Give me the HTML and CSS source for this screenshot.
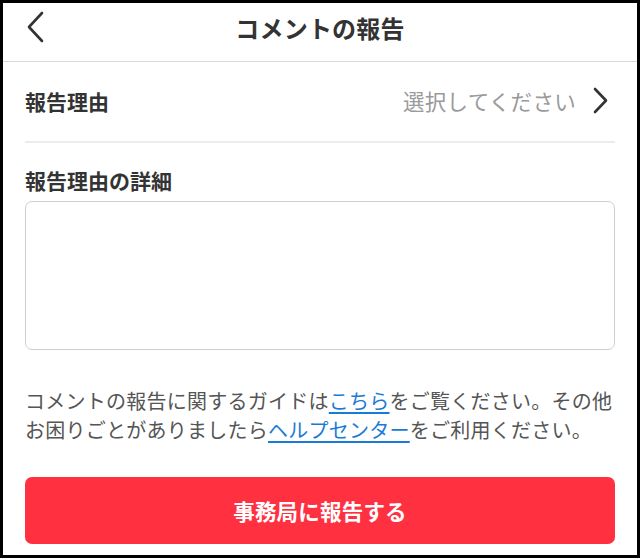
FILE: index.html
```html
<!DOCTYPE html>
<html lang="ja">
<head>
<meta charset="utf-8">
<title>コメントの報告</title>
<link rel="stylesheet" href="styles.css">
</head>
<body>
<div class="screen">
  <header class="header">
    <button class="back" aria-label="戻る">
      <svg width="18" height="32" viewBox="0 0 18 32"><path d="M16 2 L3 16 L16 30" fill="none" stroke="#333" stroke-width="2.6" stroke-linecap="round" stroke-linejoin="round"/></svg>
    </button>
    <h1 class="title">コメントの報告</h1>
  </header>
  <main class="content">
    <div class="reason-row">
      <span class="label">報告理由</span>
      <span class="select">
        <span class="placeholder">選択してください</span>
        <svg class="chev" width="15" height="27" viewBox="0 0 15 27"><path d="M2 2 L13 13.5 L2 25" fill="none" stroke="#333" stroke-width="2.6" stroke-linecap="round" stroke-linejoin="round"/></svg>
      </span>
    </div>
    <div class="label detail-label">報告理由の詳細</div>
    <textarea class="detail"></textarea>
    <p class="note">コメントの報告に関するガイドは<a href="#">こちら</a>をご覧ください。その他お困りごとがありましたら<a href="#">ヘルプセンター</a>をご利用ください。</p>
    <button class="submit">事務局に報告する</button>
  </main>
</div>
</body>
</html>
```

FILE: styles.css
```css
* { box-sizing: border-box; }
html, body {
  margin: 0;
  padding: 0;
  background: #000;
}
body {
  font-family: "Noto Sans CJK JP", "Noto Sans", sans-serif;
  color: #333;
}
.screen {
  margin: 3px;
  width: 634px;
  height: 552px;
  background: #fff;
  overflow: hidden;
}
.header {
  height: 59px;
  border-bottom: 1px solid #d9d9d9;
  display: flex;
  align-items: center;
  justify-content: center;
  position: relative;
}
.back {
  position: absolute;
  left: 23px;
  top: 8px;
  border: 0;
  background: none;
  padding: 0;
  width: 18px;
  height: 32px;
}
.back svg { display: block; }
.title {
  margin: 0;
  font-size: 24px;
  font-weight: 700;
  color: #333;
  line-height: 1;
  margin-top: -9px;
  letter-spacing: 0.2px;
}
.content {
  padding: 0 22px;
}
.reason-row {
  height: 81px;
  border-bottom: 2px solid #ececec;
  display: flex;
  align-items: center;
  justify-content: space-between;
  padding-bottom: 2px;
}
.label {
  font-size: 21px;
  font-weight: 700;
  color: #333;
  line-height: 30px;
}
.select {
  display: flex;
  align-items: center;
  gap: 17px;
  margin-right: 7px;
}
.placeholder {
  font-size: 21.5px;
  color: #9a9a9a;
  line-height: 30px;
  letter-spacing: 0.3px;
}
.chev { display: block; }
.detail-label {
  margin-top: 22px;
}
.detail {
  display: block;
  width: 100%;
  height: 149px;
  margin-top: 6px;
  border: 1.5px solid #cfcfcf;
  border-radius: 7px;
  resize: none;
  font: inherit;
  background: #fff;
}
.note {
  margin: 36px 0 0;
  font-size: 20px;
  line-height: 29px;
  color: #555;
  letter-spacing: 0.25px;
}
.note a {
  color: #1a7bd6;
  text-decoration: underline;
  text-underline-offset: 3px;
}
.submit {
  display: block;
  width: 100%;
  height: 67px;
  margin-top: 33px;
  border: 0;
  border-radius: 7px;
  background: #ff303f;
  color: #fff;
  font-family: inherit;
  font-size: 21.5px;
  font-weight: 700;
  letter-spacing: 0.2px;
}
```
